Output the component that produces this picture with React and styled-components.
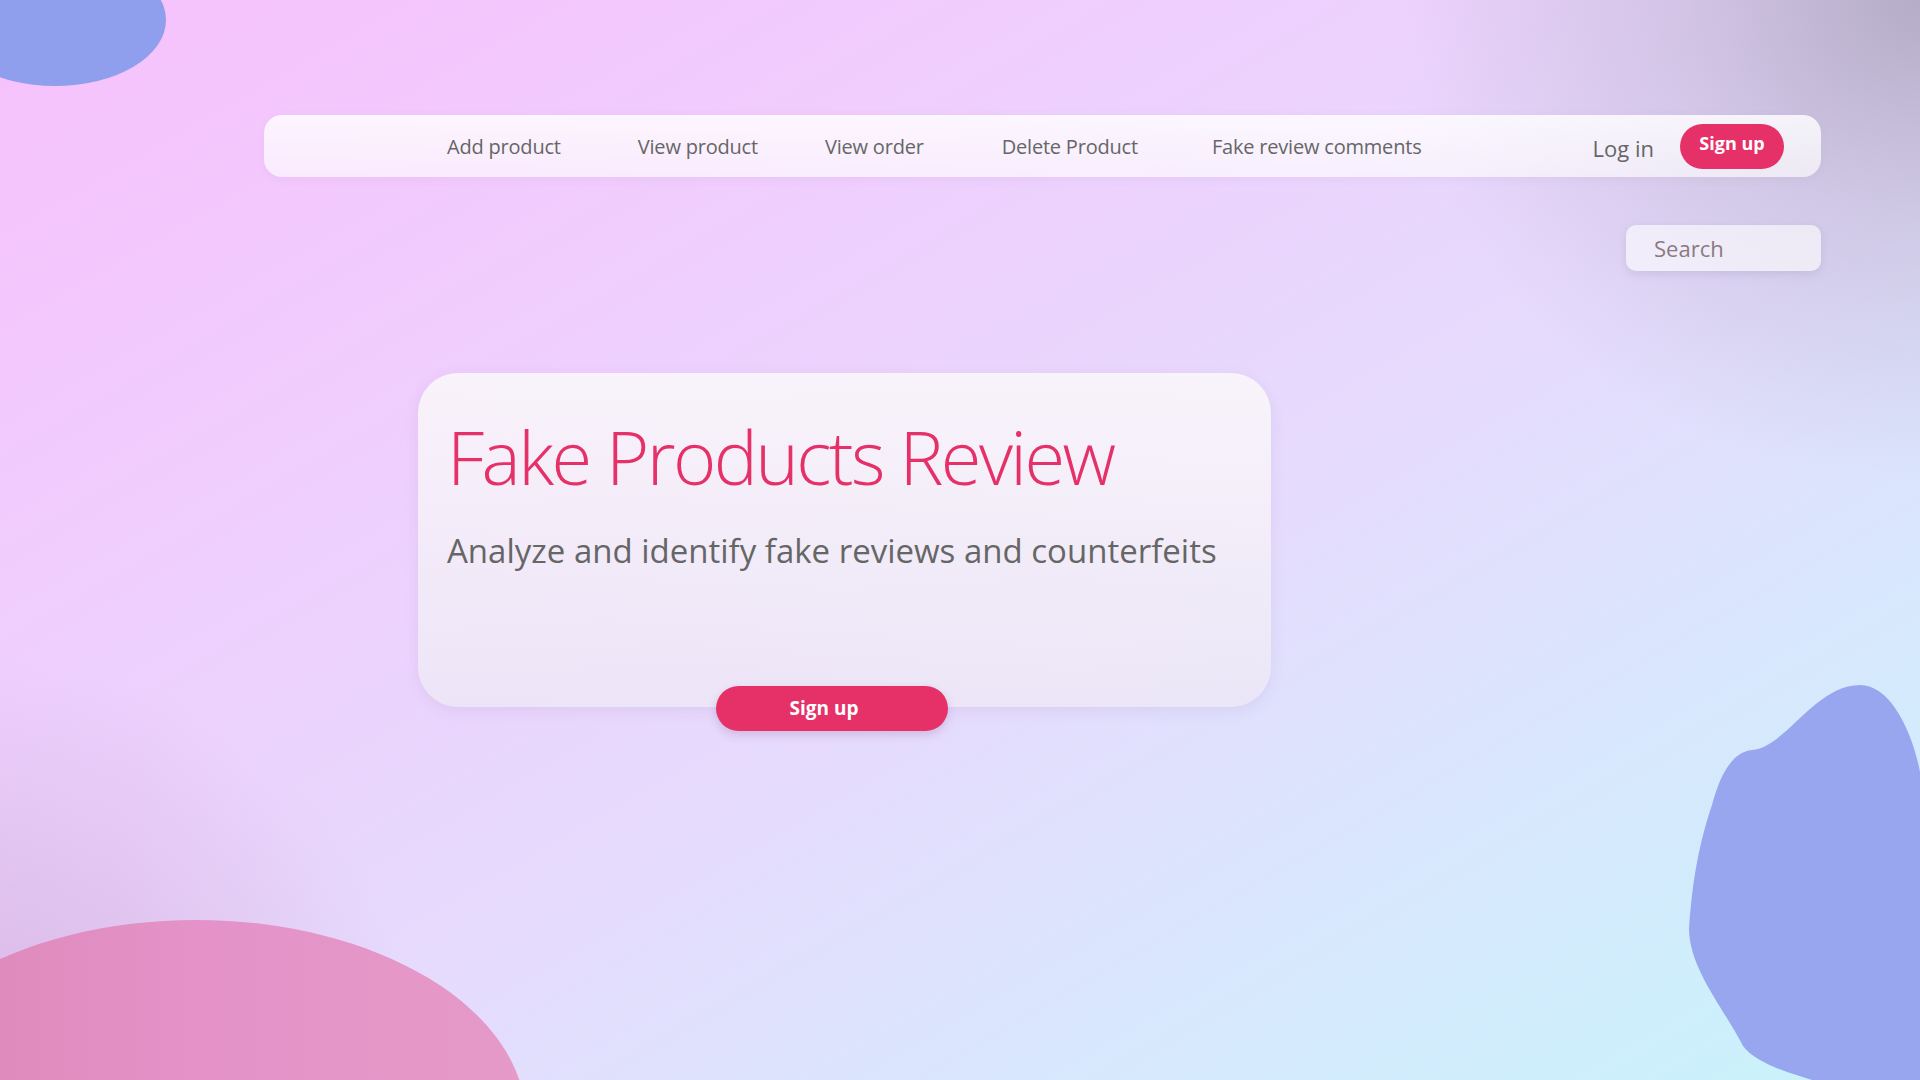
import React from "react";
import styled, { createGlobalStyle } from "styled-components";

const GlobalStyle = createGlobalStyle`
  html, body { margin: 0; padding: 0; }
  body { font-family: "Open Sans", "Noto Sans", sans-serif; }
  * { box-sizing: border-box; }
`;

const Page = styled.div`
  position: relative;
  width: 1920px;
  height: 1080px;
  overflow: hidden;
  background:
    radial-gradient(ellipse 520px 480px at 100% 0%, rgba(168, 162, 186, 0.8) 0%, rgba(168, 162, 186, 0.35) 45%, rgba(168, 162, 186, 0) 100%),
    radial-gradient(circle at 0% 100%, rgba(205, 160, 210, 0.6) 0px, rgba(205, 160, 210, 0) 420px),
    linear-gradient(150deg, #f7c1fd 0%, #efcefd 30%, #e5dcfd 58%, #d9e6fd 75%, #c8f4fb 100%);
  padding: 115px 99px 0 264px;
  display: flex;
  flex-direction: column;
`;

const Blob = styled.svg`
  position: absolute;
  left: 0;
  top: 0;
  width: 1920px;
  height: 1080px;
  pointer-events: none;
`;

const NavBar = styled.nav`
  position: relative;
  height: 62px;
  border-radius: 18px;
  background: linear-gradient(180deg, rgba(255, 255, 255, 0.82) 0%, rgba(255, 255, 255, 0.62) 100%);
  box-shadow: 0 2px 8px rgba(150, 120, 170, 0.08);
  display: flex;
  align-items: center;
  padding: 0 37px 0 183px;
`;

const NavLinks = styled.div`
  display: flex;
  align-items: center;
  flex: 1;
`;

const NavLink = styled.a`
  font-size: 20px;
  font-weight: 500;
  color: #666;
  text-decoration: none;
  margin-right: ${(p) => p.$gap}px;
  white-space: nowrap;
  letter-spacing: -0.2px;
  margin-top: 1px;
`;

const LogIn = styled.a`
  font-size: 22px;
  font-weight: 500;
  color: #666;
  text-decoration: none;
  margin-right: 26px;
  margin-top: 4px;
`;

const NavSignUp = styled.button`
  border: none;
  background: #e63068;
  color: #fff;
  font-family: inherit;
  font-size: 18px;
  font-weight: 700;
  height: 45px;
  width: 104px;
  border-radius: 23px;
  padding: 0 0 6px 0;
  cursor: pointer;
`;

const SearchRow = styled.div`
  display: flex;
  justify-content: flex-end;
  margin-top: 48px;
  position: relative;
`;

const SearchInput = styled.input`
  width: 195px;
  height: 46px;
  border: none;
  outline: none;
  border-radius: 10px;
  background: rgba(255, 255, 255, 0.6);
  box-shadow: 0 3px 8px rgba(120, 110, 160, 0.18);
  padding: 0 0 0 28px;
  font-family: inherit;
  font-size: 22px;
  color: #7d6e76;
  &::placeholder { color: #8a7a82; }
`;

const Hero = styled.section`
  position: relative;
  margin: 102px 0 0 154px;
  width: 853px;
  display: flex;
  flex-direction: column;
`;

const Card = styled.div`
  height: 334px;
  border-radius: 40px;
  background: linear-gradient(180deg, rgba(250, 247, 250, 0.9) 0%, rgba(238, 232, 246, 0.78) 100%);
  box-shadow: 0 4px 14px rgba(140, 110, 170, 0.12);
  padding: 40px 30px 0 29px;
`;

const Title = styled.h1`
  margin: 0;
  font-size: 74px;
  font-weight: 300;
  color: #e63068;
  line-height: 1.2;
  letter-spacing: -2.6px;
  white-space: nowrap;
`;

const Subtitle = styled.p`
  margin: 26px 0 0 0;
  font-size: 33px;
  font-weight: 400;
  color: #666;
  letter-spacing: 0px;
  white-space: nowrap;
`;

const HeroButton = styled.button`
  align-self: flex-start;
  margin: -21px 0 0 298px;
  position: relative;
  width: 232px;
  height: 45px;
  border: none;
  border-radius: 23px;
  background: #e63068;
  box-shadow: 0 4px 10px rgba(120, 60, 120, 0.2);
  color: #fff;
  font-family: inherit;
  font-size: 19px;
  font-weight: 700;
  padding: 0 16px 2px 0;
  cursor: pointer;
`;

const links = [
  { label: "Add product", gap: 77 },
  { label: "View product", gap: 67 },
  { label: "View order", gap: 78 },
  { label: "Delete Product", gap: 74 },
  { label: "Fake review comments", gap: 0 },
];

export default function App() {
  return (
    <>
      <GlobalStyle />
      <Page>
        <Blob viewBox="0 0 1920 1080">
          <ellipse cx="55" cy="20" rx="111" ry="66" fill="#8f9eed" />
          <defs>
            <linearGradient id="pinkBlob" x1="0" y1="0" x2="1" y2="0">
              <stop offset="0" stopColor="#dc86b6" />
              <stop offset="0.5" stopColor="#e492c8" />
              <stop offset="1" stopColor="#e59ac8" />
            </linearGradient>
          </defs>
          <ellipse cx="196" cy="1120" rx="330" ry="200" fill="url(#pinkBlob)" />
          <path
            d="M 1860 685 C 1890 685 1912 730 1920 772 L 1920 1080 L 1812 1080 C 1785 1072 1755 1062 1743 1046 C 1725 1010 1690 970 1689 930 C 1692 880 1700 840 1712 805 C 1720 775 1732 752 1752 750 C 1785 748 1815 685 1860 685 Z"
            fill="#97a6ef"
          />
        </Blob>
        <NavBar>
          <NavLinks>
            {links.map((l) => (
              <NavLink key={l.label} href="#" $gap={l.gap}>
                {l.label}
              </NavLink>
            ))}
          </NavLinks>
          <LogIn href="#">Log in</LogIn>
          <NavSignUp>Sign up</NavSignUp>
        </NavBar>
        <SearchRow>
          <SearchInput placeholder="Search" />
        </SearchRow>
        <Hero>
          <Card>
            <Title>Fake Products Review</Title>
            <Subtitle>Analyze and identify fake reviews and counterfeits</Subtitle>
          </Card>
          <HeroButton>Sign up</HeroButton>
        </Hero>
      </Page>
    </>
  );
}
